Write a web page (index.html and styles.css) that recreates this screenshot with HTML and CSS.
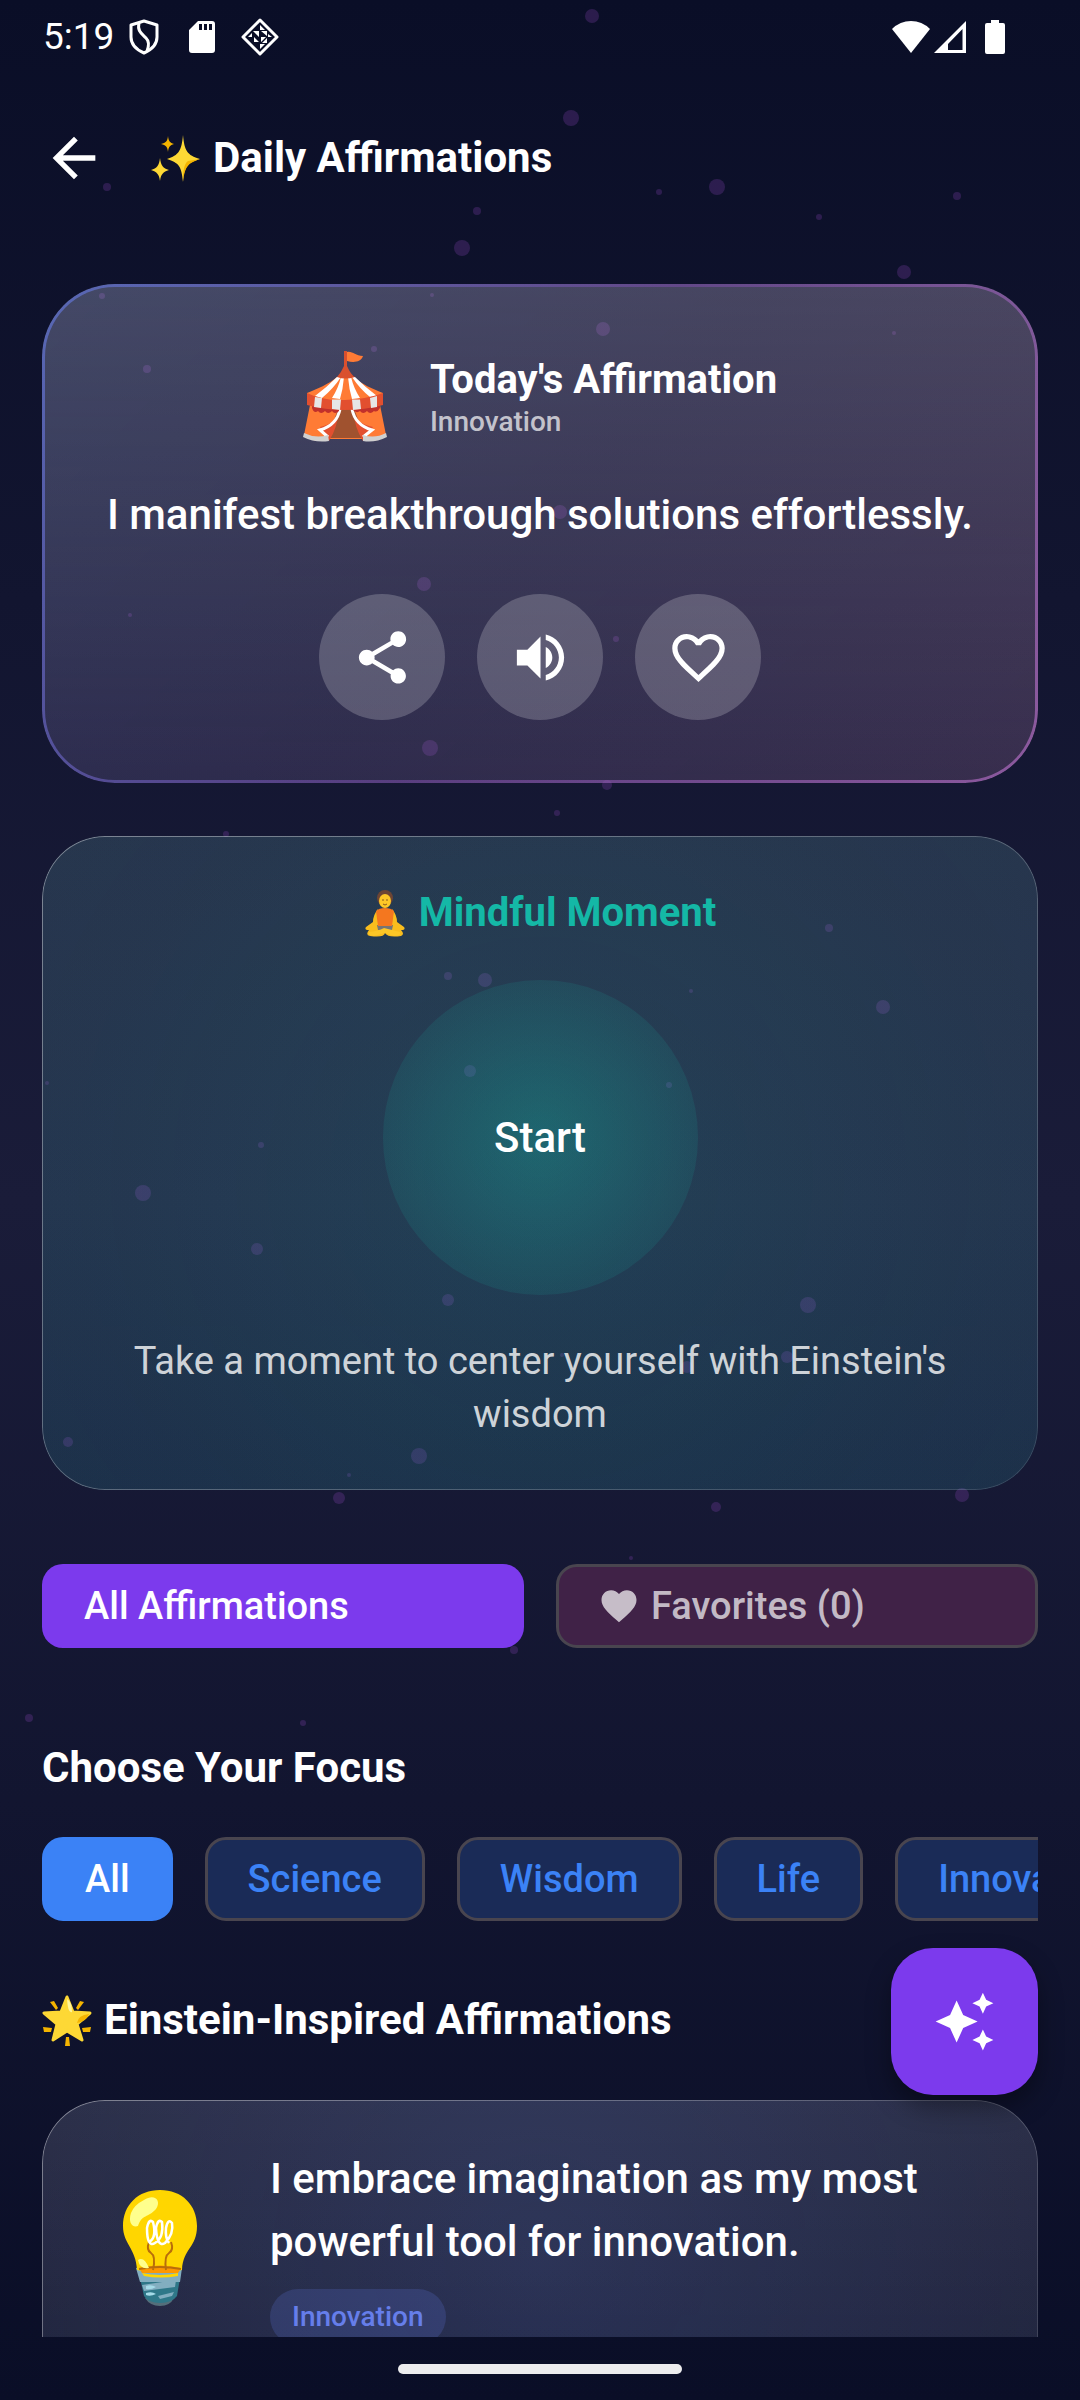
FILE: index.html
```html
<!DOCTYPE html>
<html lang="en">
<head>
<meta charset="utf-8">
<meta name="viewport" content="width=device-width, initial-scale=1">
<title>Daily Affirmations</title>
<link rel="stylesheet" href="styles.css">
</head>
<body>
<div class="app">
  <svg class="particles" viewBox="0 0 1080 2400" preserveAspectRatio="xMidYMin slice" aria-hidden="true">
    <circle cx="592" cy="16" r="7"/><circle cx="571" cy="118" r="8"/><circle cx="107" cy="187" r="4"/><circle cx="659" cy="192" r="3"/><circle cx="717" cy="187" r="8"/><circle cx="957" cy="196" r="4"/><circle cx="477" cy="211" r="4"/><circle cx="819" cy="217" r="3"/><circle cx="462" cy="248" r="8"/><circle cx="904" cy="272" r="7"/>
    <circle cx="102" cy="296" r="3"/><circle cx="432" cy="295" r="2"/><circle cx="603" cy="329" r="7"/><circle cx="894" cy="333" r="2"/><circle cx="374" cy="349" r="3"/><circle cx="147" cy="369" r="4"/><circle cx="560" cy="512" r="7"/><circle cx="424" cy="584" r="7"/><circle cx="130" cy="615" r="2"/><circle cx="616" cy="639" r="3"/><circle cx="430" cy="748" r="8"/><circle cx="607" cy="785" r="5"/><circle cx="557" cy="813" r="3"/>
    <circle cx="226" cy="834" r="3"/><circle cx="829" cy="928" r="4"/><circle cx="448" cy="976" r="4"/><circle cx="485" cy="980" r="7"/><circle cx="691" cy="991" r="2"/><circle cx="883" cy="1007" r="7"/><circle cx="470" cy="1071" r="6"/><circle cx="47" cy="1083" r="2"/><circle cx="669" cy="1085" r="3"/><circle cx="261" cy="1145" r="3"/><circle cx="143" cy="1193" r="8"/><circle cx="257" cy="1249" r="6"/><circle cx="448" cy="1300" r="6"/><circle cx="808" cy="1305" r="8"/><circle cx="787" cy="1357" r="6"/><circle cx="687" cy="1367" r="6"/><circle cx="562" cy="1355" r="2"/><circle cx="68" cy="1442" r="5"/><circle cx="419" cy="1456" r="8"/><circle cx="349" cy="1475" r="2"/><circle cx="339" cy="1498" r="6"/><circle cx="716" cy="1507" r="5"/><circle cx="962" cy="1495" r="7"/>
    <circle cx="631" cy="1558" r="2"/><circle cx="514" cy="1650" r="4"/><circle cx="29" cy="1718" r="4"/><circle cx="303" cy="1723" r="3"/>
  </svg>

  <div class="status">
    <span class="clock">5:19</span>
    <svg class="st-shield" viewBox="0 0 30 36" fill="none" stroke="#fff" stroke-width="3" stroke-linejoin="round"><path d="M15 2 L28 6 V18 C28 26 22 31 15 34 C8 31 2 26 2 18 V6 Z"/><path d="M10 4 C8 12 13 15 17 19 C20 22 20 27 18 32"/></svg>
    <svg class="st-sd" viewBox="0 0 26 32"><path fill="#fff" fill-rule="evenodd" d="M9 0H23Q26 0 26 3V29Q26 32 23 32H3Q0 32 0 29V9ZM10 3V9H13V3ZM15 3V9H18V3ZM20 3V9H23V3Z"/></svg>
    <svg class="st-diamond" viewBox="0 0 38 38"><path d="M19 2 36 19 19 36 2 19Z" fill="none" stroke="#fff" stroke-width="3" stroke-linejoin="round"/><path fill="#fff" d="M19 7 24 12H19ZM12 13H18V19ZM20 13 26 13 26 18ZM7 19 11 15V19ZM13 19 18 24H13ZM20 19H25L20 24ZM27 16 31 19 27 19ZM26 20V25H21ZM19 26H24L19 31Z"/></svg>
    <span class="spacer"></span>
    <svg class="st-wifi" viewBox="0 0 38 32"><path fill="#fff" d="M0 8Q8 0 19 0T38 8L19 32Z"/></svg>
    <svg class="st-cell" viewBox="0 0 32 32"><path fill="#fff" fill-rule="evenodd" d="M32 0V32H0ZM28.500 8 14 23V29H28.500Z"/></svg>
    <svg class="st-batt" viewBox="0 0 20 34"><path fill="#fff" d="M6 0H14V3H18Q20 3 20 5V32Q20 34 18 34H2Q0 34 0 32V5Q0 3 2 3H6Z"/></svg>
  </div>

  <header class="topbar">
    <button class="back" type="button" aria-label="Back"><svg viewBox="0 0 24 24"><path d="M20 11H7.830l5.590-5.590L12 4l-8 8 8 8 1.410-1.410L7.830 13H20v-2z"/></svg></button>
    <h1 class="title"><svg class="emoji" viewBox="0 0 50 50" aria-hidden="true"><g fill="#fdd835"><path d="M32 2C33.500 18 36 22 49 26C36 30 33.500 33 32 49C30.500 33 28 30 16 26C28 22 30.500 18 32 2Z"/><path d="M9 25C10 33 12 35 18 37C12 39 10 41 9 48C8 41 6 39 0 37C6 35 8 33 9 25Z"/></g><path fill="#f4b400" d="M17 3C17.500 8 19 10 23 11C19 12 17.500 14 17 19C16.500 14 15 12 10 11C15 10 16.500 8 17 3ZM49 26C38 30 34 32 32 49C32 38 33 31 37 28Z"/></svg>Daily Affirmations</h1>
  </header>

  <main class="content">
    <section class="card today">
      <div class="today-head">
        <svg class="tent" viewBox="0 0 84 92" aria-hidden="true">
          <path fill="#d9502e" d="M41 0H44V18H41Z"/><path fill="#ff7b35" d="M44 1C50 0 52 5 60 5C58 11 51 12 44 10Z"/>
          <path fill="#ff7b35" d="M7 54H77L83 84Q72 93 61 88H24Q12 93 1 84Z"/>
          <path fill="#a0522f" d="M36 55H50L62 87H25Z"/>
          <path fill="#e24f2f" d="M37 56Q36 72 17 76L26 90Q34 78 37 56ZM49 56Q50 72 70 76L60 90Q52 78 49 56Z"/>
          <path fill="none" stroke="#fff" stroke-width="3" d="M37 58Q34 74 17 79L25 86M49 58Q52 74 69 79L60 86"/>
          <path fill="#d0d0d0" d="M1 82Q13 88 25 84L26 90Q12 92 0 86ZM83 82Q72 88 60 84L60 90Q72 92 84 86Z"/>
          <path fill="#c1302b" d="M9 54H36V60Q32 64 29 60Q25 64 22 60Q18 64 15 60Q11 63 9 57ZM49 54H77V57Q74 62 71 60Q67 64 64 60Q60 64 57 60Q53 63 49 58Z"/>
          <path fill="#ff7b35" d="M34 26C26 33 14 38 4 42V48Q42 57 80 48V42C70 38 58 33 51 26Z"/>
          <path fill="#fff" d="M34 26Q24 36 12 45L19 47Q30 38 38 26ZM38 26Q35 38 29 47L37 48Q40 38 41 26ZM45 26Q46 38 49 48L57 47Q51 38 48 26ZM49 26Q57 38 67 46L74 45Q62 36 52 26Z"/>
          <path fill="#e24f2f" d="M4 42Q20 50 42 49T80 42V54Q62 59 42 59T4 54Z"/>
          <path fill="#e6e6e6" d="M12 46 19 47 18 57 11 56ZM29 48.500H38L37 59 29 58ZM49 48.500H57L58 58 50 59ZM67 47 74 45V56L68 57Z"/>
          <path fill="#d9502e" d="M41 15H44Q48 24 52 26Q42 29 34 26Q38 22 41 15Z"/>
        </svg>
        <div>
          <h2 class="h-card">Today's Affirmation</h2>
          <p class="category">Innovation</p>
        </div>
      </div>
      <p class="quote">I manifest breakthrough solutions effortlessly.</p>
      <div class="actions">
        <button class="round" type="button" aria-label="Share"><svg viewBox="0 0 24 24"><path d="M18 16.080c-.76 0-1.440.3-1.960.77L8.910 12.700c.05-.23.090-.46.090-.7s-.04-.47-.09-.7l7.050-4.110c.54.5 1.250.81 2.040.81 1.660 0 3-1.340 3-3s-1.340-3-3-3-3 1.340-3 3c0 .24.040.47.090.7L8.040 9.810C7.500 9.310 6.790 9 6 9c-1.660 0-3 1.340-3 3s1.340 3 3 3c.79 0 1.500-.31 2.040-.81l7.120 4.160c-.05.21-.08.43-.08.65 0 1.610 1.310 2.920 2.920 2.920s2.920-1.310 2.920-2.920-1.310-2.920-2.920-2.920z"/></svg></button>
        <button class="round" type="button" aria-label="Listen"><svg viewBox="0 0 24 24"><path d="M3 9v6h4l5 5V4L7 9H3zm13.500 3c0-1.770-1.020-3.290-2.500-4.030v8.050c1.480-.73 2.500-2.250 2.500-4.020zM14 3.230v2.060c2.890.86 5 3.540 5 6.710s-2.110 5.850-5 6.710v2.060c4.010-.91 7-4.490 7-8.770s-2.990-7.860-7-8.770z"/></svg></button>
        <button class="round" type="button" aria-label="Add to favorites"><svg viewBox="0 0 24 24"><path d="M16.500 3c-1.740 0-3.410.81-4.500 2.090C10.910 3.810 9.240 3 7.500 3 4.420 3 2 5.420 2 8.500c0 3.780 3.400 6.860 8.550 11.540L12 21.350l1.450-1.320C18.600 15.360 22 12.280 22 8.500 22 5.420 19.580 3 16.500 3zm-4.400 15.550l-.1.100-.1-.1C7.140 14.240 4 11.390 4 8.500 4 6.500 5.500 5 7.500 5c1.540 0 3.040.99 3.570 2.360h1.870C13.460 5.990 14.960 5 16.500 5c2 0 3.500 1.500 3.500 3.500 0 2.890-3.140 5.740-7.900 10.050z"/></svg></button>
      </div>
    </section>

    <section class="card mindful">
      <h2 class="h-card teal"><svg class="lotus" viewBox="0 0 42 48" aria-hidden="true"><circle cx="21" cy="9" r="8" fill="#6d4534"/><ellipse cx="21" cy="12" rx="6" ry="7" fill="#fdc727"/><path d="M18 11h2M22 11h2M19 15q2 2 4 0" stroke="#8a5a1e" fill="none"/><path fill="#f9bd1d" d="M14 20Q9 26 9 33L2 38Q0 41 5 41Q1 46 6 47Q20 49 21 44Q24 49 37 47Q41 45 37 41Q42 41 40 38L33 33Q33 26 28 20L27 36H15Z"/><path fill="#757575" d="M13 36H29L28 41L21 43L14 41Z"/><path fill="#f4771f" d="M12 22Q15 19 21 19T30 22L28 37H14Z"/><path fill="#fdc727" d="M5 43Q14 42 20 39L36 43Q38 47 30 47L21 44L10 47Q3 46 5 43Z"/></svg>Mindful Moment</h2>
      <button class="start" type="button">Start</button>
      <p class="hint">Take a moment to center yourself with Einstein's wisdom</p>
    </section>

    <div class="tabs">
      <button class="tab active" type="button">All Affirmations</button>
      <button class="tab fav" type="button"><svg viewBox="0 0 24 24" aria-hidden="true"><path d="M12 21.350l-1.450-1.320C5.400 15.360 2 12.280 2 8.500 2 5.420 4.420 3 7.500 3c1.740 0 3.410.81 4.500 2.090C13.090 3.810 14.760 3 16.500 3 19.580 3 22 5.420 22 8.500c0 3.780-3.400 6.860-8.550 11.540L12 21.350z"/></svg>Favorites (0)</button>
    </div>

    <h2 class="h-section">Choose Your Focus</h2>
    <div class="chips">
      <button class="chip on" type="button">All</button>
      <button class="chip" type="button">Science</button>
      <button class="chip" type="button">Wisdom</button>
      <button class="chip" type="button">Life</button>
      <button class="chip" type="button">Innovation</button>
    </div>

    <h2 class="h-section list-title"><svg class="emoji" viewBox="0 0 50 52" aria-hidden="true"><path fill="#fdd835" stroke="#fdd835" stroke-width="3" stroke-linejoin="round" d="M25 3 31 18 48 19 35 30 40 46 25 37 11 46 15 30 2 19 19 18Z"/><path fill="#fff59d" d="M25 5Q30 8 30 18Q26 20 25 5Z"/><path fill="#f4b400" d="M47 20Q36 21 35 29Q44 28 47 20ZM8 8 12 7 16 14 14 16ZM42 8 38 7 34 14 36 16ZM1 33 10 34 9 38 2 38ZM49 33 40 34 41 38 48 38ZM23 52 24 43H27L28 52Z"/></svg>Einstein-Inspired Affirmations</h2>

    <article class="card item">
      <svg class="bulb" viewBox="0 0 76 116" aria-hidden="true">
        <path fill="#546e7a" d="M23 108H52Q48 116 38 116T23 108Z"/>
        <path fill="#2f7889" d="M18 88H58L55 106Q50 113 38 113T22 106Z"/>
        <path fill="#82aec0" d="M14 78H60L58 92H18ZM20 95 54 90 53 97 22 101ZM36 106 52 102 50 106 38 109Z"/>
        <path fill="#ffd600" d="M38 0C60 0 75 15 75 36C75 58 61 58 60 80Q38 86 15 80C14 58 1 54 1 36C1 15 16 0 38 0Z"/>
        <path fill="#ff9800" d="M17 78Q38 73 59 78L56 83H20Z"/><path fill="#ffd600" d="M20 83Q38 87 56 83V86Q38 89 22 86Z"/>
        <path fill="none" stroke="#b86d0b" stroke-width="2" d="M27 52Q24 60 29 63Q34 66 31 80M49 52Q52 60 47 63Q42 66 44 80M17 79Q38 75 59 79"/>
        <path fill="none" stroke="#fff" stroke-width="2.500" d="M27 52Q35 48 31 32Q27 28 25 38Q25 58 33 53Q42 48 40 32Q36 28 34 38Q35 58 43 53Q52 44 50 33Q46 28 44 38Q43 48 47 53"/>
        <path fill="#ffff8d" d="M22 10C32 3 40 10 34 19C26 28 20 24 16 36C10 38 6 32 9 23Q12 15 22 10ZM16 70Q22 66 27 78Q18 80 16 70Z"/>
        <path fill="#a5dbe8" d="M24 96Q29 94 34 97Q29 100 24 99ZM24 103Q30 101 34 104Q28 107 24 105Z"/>
      </svg>
      <div>
        <p class="item-text">I embrace imagination as my most powerful tool for innovation.</p>
        <span class="badge">Innovation</span>
      </div>
    </article>
  </main>

  <button class="fab" type="button" aria-label="Generate affirmation"><svg viewBox="0 0 24 24"><path d="M19 9l1.250-2.750L23 5l-2.750-1.250L19 1l-1.250 2.750L15 5l2.750 1.250L19 9zm-7.500.5L9 4 6.500 9.500 1 12l5.500 2.500L9 20l2.500-5.500L17 12l-5.500-2.500zM19 15l-1.250 2.750L15 19l2.750 1.250L19 23l1.250-2.750L23 19l-2.750-1.250L19 15z"/></svg></button>
  <div class="navbar"><span class="handle"></span></div>
</div>
</body>
</html>
```
FILE: styles.css
```css
* { box-sizing: border-box; }
html, body { margin: 0; height: 100%; background: #0a0e27; }
body { font-family: Roboto, "Noto Sans", sans-serif; color: #fff; }
h1, h2, p { margin: 0; }
button { font: inherit; color: inherit; border: 0; padding: 0; background: none; cursor: pointer; }
svg { display: block; flex: none; }

.app {
  position: relative;
  display: flex;
  flex-direction: column;
  height: 100vh;
  overflow: hidden;
  background: linear-gradient(180deg, #0a0e27 0%, #1a1c39 50%, #0a0e27 100%);
}
.app > * { position: relative; }
.app > .particles { position: absolute; inset: 0; width: 100%; height: 100%; fill: #8a44b8; opacity: .26; }

/* Status bar */
.status { display: flex; align-items: center; height: 74px; padding: 0 75px 0 43px; flex: none; }
.clock { font-size: 37px; line-height: 42px; }
.spacer { flex: 1; }
.st-shield { width: 30px; height: 36px; margin-left: 15px; }
.st-sd { width: 26px; height: 32px; margin-left: 30px; }
.st-diamond { width: 38px; height: 38px; margin-left: 26px; }
.st-wifi { width: 38px; height: 32px; }
.st-cell { width: 32px; height: 32px; margin-left: 4px; }
.st-batt { width: 20px; height: 34px; margin-left: 19px; }

/* Header */
.topbar { display: flex; align-items: center; gap: 45px; height: 168px; padding: 0 42px; flex: none; }
.back svg { width: 64px; height: 64px; fill: #fff; }
.title, .h-section { font-size: 42px; line-height: 56px; font-weight: 700; display: flex; align-items: center; gap: 12px; }
.emoji { width: 50px; height: 52px; }

/* Scrolling content */
.content { flex: 1; min-height: 0; overflow: hidden; margin: 0 42px; padding-top: 42px; }
.card { position: relative; border-radius: 63px; }
.card::before {
  content: "";
  position: absolute;
  inset: 0;
  border-radius: inherit;
  padding: 1px;
  background: linear-gradient(135deg, rgba(255,255,255,.4), rgba(255,255,255,.12));
  -webkit-mask: linear-gradient(#000 0 0) content-box, linear-gradient(#000 0 0);
  mask: linear-gradient(#000 0 0) content-box exclude, linear-gradient(#000 0 0);
  -webkit-mask-composite: xor;
  pointer-events: none;
}
.h-card { font-size: 40px; line-height: 50px; font-weight: 700; }

.today {
  display: flex;
  flex-direction: column;
  align-items: center;
  padding: 63px 42px;
  border-radius: 73px;
  background:
    linear-gradient(180deg, rgba(255,255,255,.19), rgba(255,255,255,.05)),
    linear-gradient(135deg, rgba(102,126,234,.13), rgba(118,85,162,.15) 50%, rgba(180,95,160,.16));
}
.today::before { padding: 3px; background: linear-gradient(120deg, rgba(102,126,234,.6), rgba(118,75,162,.6) 50%, rgba(210,125,225,.55)); }
.today-head { display: flex; align-items: center; gap: 43px; height: 100px; }
.tent { width: 84px; height: 92px; }
.category { font-size: 28px; line-height: 34px; font-weight: 500; color: rgba(255,255,255,.7); }
.quote { margin-top: 36px; font-size: 42px; line-height: 63px; font-weight: 500; text-align: center; }
.actions { display: flex; gap: 32px; margin-top: 48px; }
.round { display: grid; place-items: center; width: 126px; height: 126px; border-radius: 50%; background: rgba(255,255,255,.2); }
.round svg { width: 63px; height: 63px; fill: #fff; }

.mindful {
  display: flex;
  flex-direction: column;
  align-items: center;
  margin-top: 53px;
  padding: 52px 63px 49px;
  background:
    radial-gradient(circle at 50% 52%, rgba(20,184,166,.1), rgba(20,184,166,.03) 460px, rgba(20,184,166,.02)),
    linear-gradient(180deg, rgba(120,170,180,.19), rgba(60,140,160,.18));
}
.teal { display: flex; align-items: center; gap: 13px; color: #14b8a6; }
.lotus { width: 42px; height: 48px; }
.start {
  width: 315px;
  height: 315px;
  margin-top: 42px;
  border-radius: 50%;
  font-size: 42px;
  font-weight: 500;
  background: radial-gradient(circle, rgba(20,184,166,.32), rgba(20,184,166,.12) 70%);
}
.hint { margin-top: 40px; font-size: 38px; line-height: 53px; text-align: center; color: rgba(255,255,255,.8); }

.tabs { display: grid; grid-template-columns: 1fr 1fr; gap: 32px; margin-top: 74px; }
.tab, .chip { display: flex; align-items: center; height: 84px; padding: 0 42px; border-radius: 21px; font-size: 38px; font-weight: 500; white-space: nowrap; }
.tab.active { background: #7c3aed; }
.tab.fav { gap: 11px; padding: 0 39px; border: 3px solid #49454f; background: #402247; color: rgba(255,255,255,.7); }
.tab svg { width: 42px; height: 42px; fill: currentColor; }

.h-section { margin-top: 92px; }
.chips { display: flex; gap: 32px; margin-top: 41px; overflow: hidden; }
.chip { flex: none; padding: 0 40px; border: 3px solid #49454f; background: #1a2b57; color: #3b82f6; }
.chip.on { border-color: #3b82f6; background: #3b82f6; color: #fff; }
.list-title { margin-top: 71px; }

.item {
  display: flex;
  align-items: flex-start;
  gap: 72px;
  margin-top: 52px;
  padding: 47px 80px 53px;
  min-height: 315px;
  background:
    radial-gradient(circle at 50% 50%, rgba(90,120,220,.16), rgba(90,112,225,.03) 520px),
    linear-gradient(180deg, rgba(255,255,255,.12), rgba(255,255,255,.08));
}
.bulb { width: 76px; height: 116px; margin-top: 43px; }
.item-text { font-size: 42px; line-height: 63px; font-weight: 500; max-width: 690px; }
.badge { display: inline-block; margin-top: 16px; padding: 11px 22px; border-radius: 28px; font-size: 28px; line-height: 34px; font-weight: 500; color: #667eea; background: rgba(102,126,234,.2); }

.app > .fab {
  position: absolute;
  right: 42px;
  bottom: 305px;
  display: grid;
  place-items: center;
  width: 147px;
  height: 147px;
  border-radius: 42px;
  background: #7c3aed;
  box-shadow: 0 12px 24px rgba(0,0,0,.35);
}
.fab svg { width: 63px; height: 63px; fill: #fff; }
.navbar { display: flex; justify-content: center; align-items: center; height: 63px; flex: none; }
.handle { width: 284px; height: 10px; border-radius: 5px; background: #ececee; }
```
